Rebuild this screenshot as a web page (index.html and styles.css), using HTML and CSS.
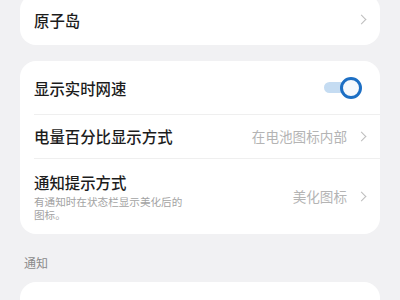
FILE: index.html
```html
<!DOCTYPE html>
<html>
<head>
<meta charset="utf-8">
<link rel="stylesheet" href="styles.css">
</head>
<body>
<div class="page">
  <div class="card card-top">
    <div class="row row-top">
      <span class="title">原子岛</span>
      <span class="chev"></span>
    </div>
  </div>

  <div class="card">
    <div class="row row-a">
      <span class="title">显示实时网速</span>
      <span class="toggle"><span class="knob"></span></span>
    </div>
    <div class="row row-b">
      <span class="title">电量百分比显示方式</span>
      <span class="right"><span class="value">在电池图标内部</span><span class="chev"></span></span>
    </div>
    <div class="row row-c">
      <div class="col">
        <span class="title">通知提示方式</span>
        <span class="sub">有通知时在状态栏显示美化后的图标。</span>
      </div>
      <span class="right"><span class="value">美化图标</span><span class="chev"></span></span>
    </div>
  </div>

  <div class="section">通知</div>

  <div class="card card-bottom"></div>
</div>
</body>
</html>
```

FILE: styles.css
```css
html, body {
  margin: 0;
  padding: 0;
  background: #f1f1f3;
}
body {
  width: 400px;
  height: 300px;
  overflow: hidden;
  font-family: "Noto Sans CJK SC", "Noto Sans", sans-serif;
}
.page {
  padding: 0 20px;
  display: flex;
  flex-direction: column;
}
.card {
  background: #ffffff;
  border-radius: 16px;
  margin-bottom: 16px;
}
.card-top {
  margin-top: -6px;
}
.row {
  display: flex;
  align-items: center;
  justify-content: space-between;
  padding: 0 14px 0 14px;
  position: relative;
}
.row + .row::before {
  content: "";
  position: absolute;
  top: 0;
  left: 14px;
  right: 0;
  height: 1px;
  background: #efefef;
}
.row-top { height: 51px; }
.row-a { height: 53px; }
.row-b { height: 44px; }
.row-c { height: 76px; }
.title {
  font-size: 15.4px;
  line-height: 20px;
  color: #1c1c1c;
  font-weight: 500;
}
.col {
  display: flex;
  flex-direction: column;
}
.sub {
  font-size: 10.6px;
  line-height: 13px;
  color: #a3a3a3;
  width: 152px;
  margin-top: 3px;
}
.right {
  display: flex;
  align-items: center;
}
.value {
  font-size: 13.6px;
  color: #b4b4b4;
  margin-right: 11px;
}
.chev {
  width: 6px;
  height: 6px;
  border-top: 1.4px solid #bdbdbd;
  border-right: 1.4px solid #bdbdbd;
  transform: rotate(45deg);
  margin-right: 1px;
}
.toggle {
  position: relative;
  width: 31px;
  height: 11px;
  border-radius: 6px;
  background: #c5dcf2;
  margin-right: 11px;
}
.knob {
  position: absolute;
  right: -7px;
  top: -5.5px;
  width: 22px;
  height: 22px;
  border-radius: 50%;
  border: 3px solid #1d6fc4;
  background: #f6f9fd;
  box-sizing: border-box;
}
.section {
  font-size: 12px;
  color: #8a8a8a;
  padding-left: 4px;
  margin-top: 4px;
  line-height: 18px;
}
.card-bottom {
  margin-top: 10px;
  height: 40px;
}
```
